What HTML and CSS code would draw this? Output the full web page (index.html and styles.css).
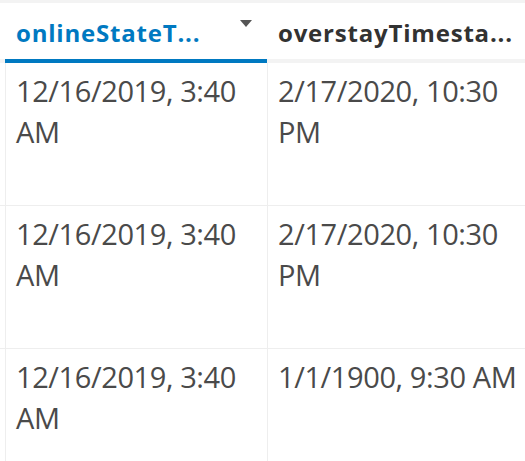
FILE: index.html
```html
<!DOCTYPE html>
<html lang="en">
<head>
    <meta charset="UTF-8">
    <meta name="viewport" content="width=device-width, initial-scale=1.0">
    <title>Feature Table</title>
    <link rel="stylesheet" href="styles.css">
</head>
<body>
    <div class="grid">
        <div class="grid-head">
            <div class="edge"></div>
            <div class="head-cell sorted">
                <span class="head-label">onlineStateT...</span>
                <span class="sort-arrow"></span>
            </div>
            <div class="head-cell">
                <span class="head-label">overstayTimesta...</span>
            </div>
        </div>
        <div class="grid-row">
            <div class="edge"></div>
            <div class="cell">12/16/2019, 3:40 AM</div>
            <div class="cell">2/17/2020, 10:30 PM</div>
        </div>
        <div class="grid-row">
            <div class="edge"></div>
            <div class="cell">12/16/2019, 3:40 AM</div>
            <div class="cell">2/17/2020, 10:30 PM</div>
        </div>
        <div class="grid-row">
            <div class="edge"></div>
            <div class="cell">12/16/2019, 3:40 AM</div>
            <div class="cell">1/1/1900, 9:30 AM</div>
        </div>
    </div>
</body>
</html>
```
FILE: styles.css
```css
body {
    margin: 0;
    font-family: "Open Sans", "Noto Sans", sans-serif;
    background-color: #fff;
    overflow: hidden;
    height: 461px;
}
.grid {
    border-top: 3px solid #f3f3f3;
    width: 535px;
}
.grid-head {
    display: flex;
    height: 60px;
}
.grid-head .edge {
    width: 5px;
    border-bottom: 4px solid #f3f3f3;
}
.head-cell {
    display: flex;
    align-items: center;
    width: 262px;
    box-sizing: border-box;
    padding: 2px 11px 0;
    border-bottom: 4px solid #f3f3f3;
    font-size: 24px;
    letter-spacing: 0.8px;
    font-weight: bold;
    color: #323232;
    white-space: nowrap;
}
.head-cell.sorted {
    padding-right: 15px;
    color: #0079c1;
    border-bottom-color: #0079c1;
    justify-content: space-between;
}
.sort-arrow {
    width: 0;
    height: 0;
    margin-bottom: 18px;
    border-left: 6px solid transparent;
    border-right: 6px solid transparent;
    border-top: 7px solid #555;
}
.grid-row {
    display: flex;
    height: 142px;
    border-bottom: 1px solid #eee;
}
.edge {
    width: 5px;
    flex-shrink: 0;
}
.cell {
    width: 262px;
    box-sizing: border-box;
    padding: 7px 10px;
    border-left: 1px solid #eee;
    font-size: 29px;
    line-height: 41px;
    letter-spacing: -0.4px;
    color: #4a4a4a;
}
```
